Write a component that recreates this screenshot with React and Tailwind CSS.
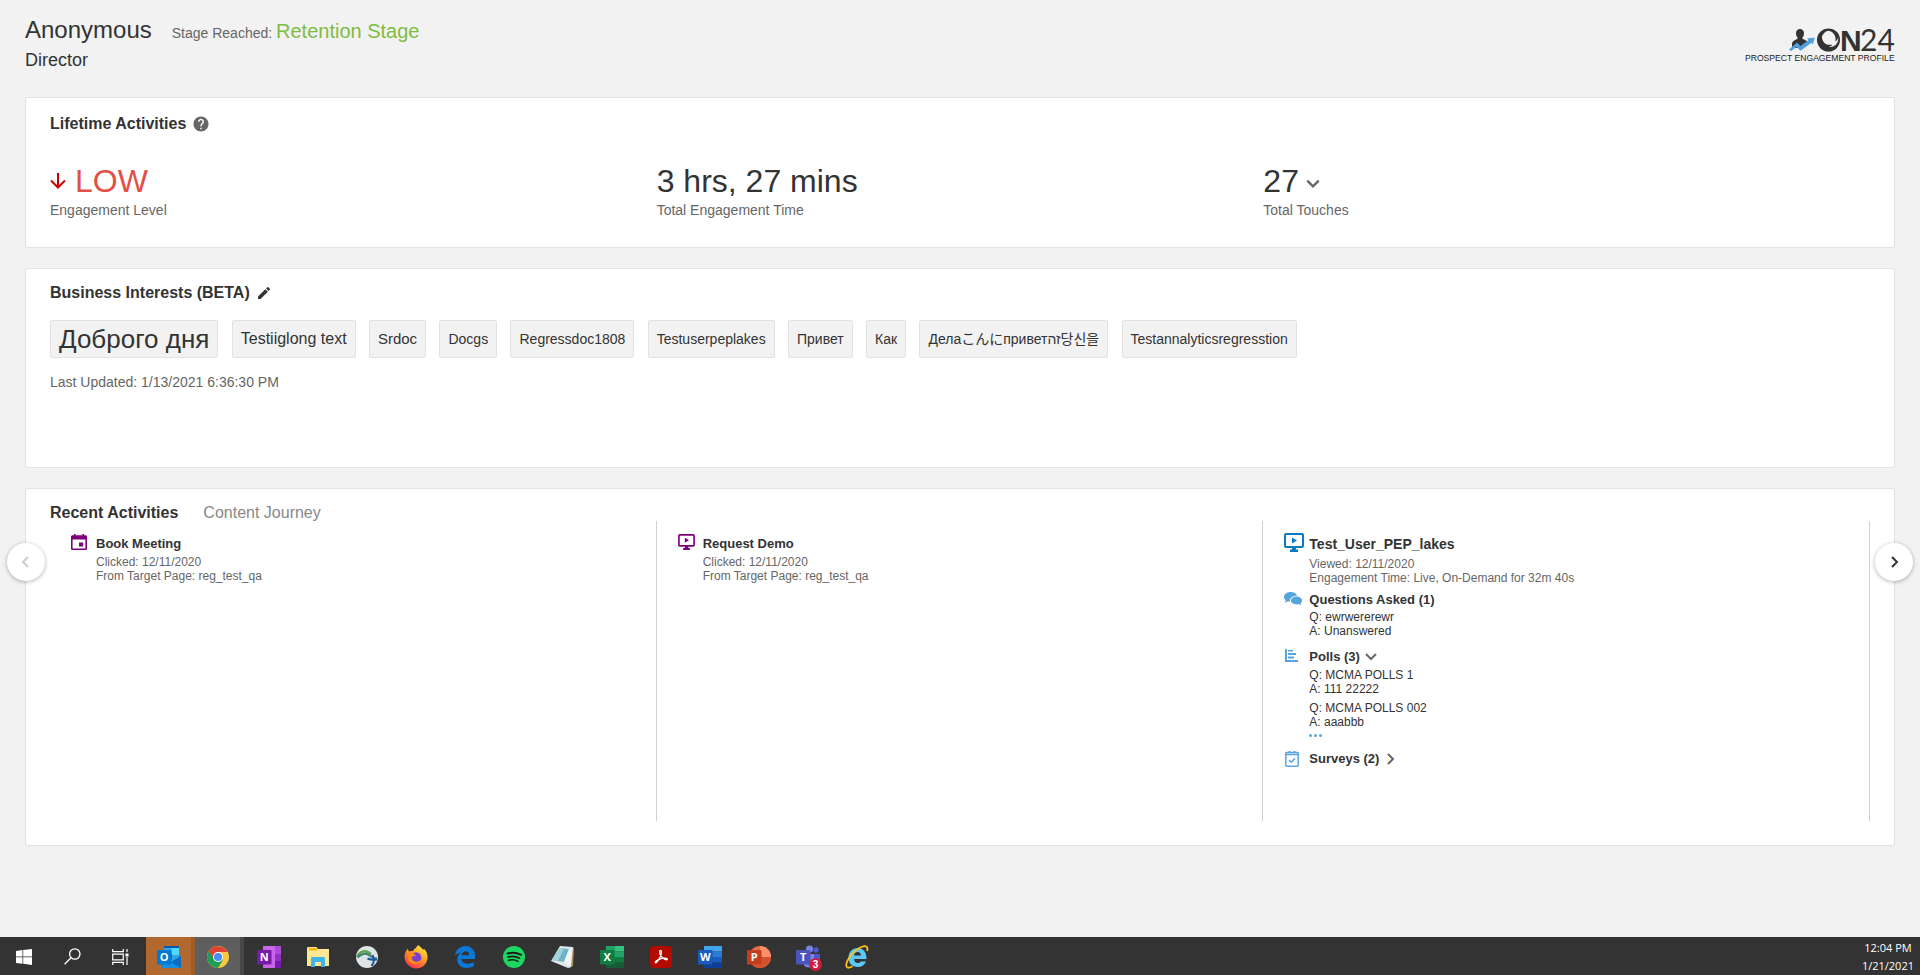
import { MdHelp, MdEdit } from "react-icons/md";

const STATS = [
  { value: "LOW", label: "Engagement Level", tone: "low" },
  { value: "3 hrs, 27 mins", label: "Total Engagement Time" },
  { value: "27", label: "Total Touches", expandable: true },
];

const INTERESTS = [
  { text: "Доброго дня", size: "text-[26px]" },
  { text: "Testiiglong text", size: "text-base" },
  { text: "Srdoc", size: "text-[15px]" },
  { text: "Docgs", size: "text-sm" },
  { text: "Regressdoc1808", size: "text-sm" },
  { text: "Testuserpeplakes", size: "text-sm" },
  { text: "Привет", size: "text-sm" },
  { text: "Как", size: "text-sm" },
  { text: "Делаこんにприветזה당신을", size: "text-sm" },
  { text: "Testannalyticsregresstion", size: "text-sm" },
];

const POLLS = [
  { q: "MCMA POLLS 1", a: "111 22222" },
  { q: "MCMA POLLS 002", a: "aaabbb" },
];

function Chevron({ dir = "right", size = 14, width = 2 }) {
  const paths = {
    right: "M5 2l5 5-5 5",
    left: "M9 2L4 7l5 5",
    down: "M2 4l5 5 5-5",
  };
  return (
    <svg width={size} height={size} viewBox="0 0 14 14" fill="none" stroke="currentColor" strokeWidth={width}>
      <path d={paths[dir]} />
    </svg>
  );
}

function ArrowDown() {
  return (
    <svg className="mr-[3px]" width="16" height="18" viewBox="0 0 16 18" fill="none" stroke="#cc0000" strokeWidth="2">
      <path d="M8 1v14M1 8.5l7 7 7-7" />
    </svg>
  );
}

function CalendarIcon() {
  return (
    <svg width="16" height="16" viewBox="0 0 16 16" fill="#7f007f">
      <path
        fillRule="evenodd"
        d="M3 0h1.6v1.2h6.8V0H13v1.2h1.4c.9 0 1.6.7 1.6 1.5v11.7c0 .9-.7 1.6-1.6 1.6H1.600C.7 16 0 15.300 0 14.400V2.700c0-.8.7-1.500 1.600-1.500H3zM1.600 5.600v8.800h12.800V5.600z"
      />
      <path d="M8 8.500h4.200v4H8z" />
    </svg>
  );
}

function MonitorIcon({ color, className }) {
  return (
    <svg className={className} viewBox="0 0 20 19" fill="none">
      <rect x="1" y="1" width="18" height="13" rx="1" stroke={color} strokeWidth="2" />
      <path d="M8 4.500l5 3-5 3zM8 14h4v2.500h2V19H6v-2.500h2z" fill={color} />
    </svg>
  );
}

function ChatIcon() {
  return (
    <svg width="18" height="14" viewBox="0 0 18 14" fill="#57a5df">
      <path d="M6.500 0C10 0 12.600 1.500 13 3.700 9 3.700 6 5.500 6 8.300c0 .500.1.9.3 1.300-.9 0-1.700-.1-2.400-.3-.9.8-2 1.200-3.400 1.200.7-.7 1.100-1.400 1.200-2.200C.6 7.400 0 6.200 0 5c0-2.800 2.900-5 6.500-5z" />
      <path d="M12.500 4.600c3.100 0 5.500 1.700 5.500 3.900 0 1.100-.5 2-1.400 2.700.1.700.4 1.300 1 1.900-1.200 0-2.100-.4-2.900-1-.7.2-1.400.3-2.200.3-3.100 0-5.500-1.700-5.500-3.900s2.400-3.900 5.500-3.900z" />
    </svg>
  );
}

function PollIcon() {
  return (
    <svg width="13" height="13" viewBox="0 0 13 13" fill="#57a5df">
      <path d="M0 0h2v11h11v2H0zM3 1h5v1.500H3zM3 4h8v2H3zM3 7.500h6v2H3z" />
    </svg>
  );
}

function SurveyIcon() {
  return (
    <svg width="14" height="16" viewBox="0 0 14 16" fill="none" stroke="#57a5df">
      <rect x=".8" y="1.500" width="12.400" height="13.700" rx="1" strokeWidth="1.500" />
      <path d="M1 3.500h12" strokeWidth="1.500" />
      <path d="M3.500.5h2M8.500.5h2" />
      <path d="M4 9l2.200 2.200L10 7.400" strokeWidth="1.500" />
    </svg>
  );
}

function Logo() {
  return (
    <svg width="152" height="40" viewBox="0 0 152 40" overflow="visible" aria-label="ON24 Prospect Engagement Profile">
      <g fill="#333">
        <path d="M57 2c2.500 0 4 1.800 4 4.200 0 2-.7 3.300-1.500 4.200v1.500c2.500.8 5 1.500 5.500 4.500l-9 4.500h-7v-4c.3-3 3-4.200 5.500-5v-1.500C53.700 9.500 53 8.200 53 6.200 53 3.800 54.500 2 57 2z" />
        <circle cx="85.500" cy="13" r="11.500" />
        <circle cx="87" cy="11.800" r="8.300" fill="#f2f2f2" />
        <path d="M84 3.500c6 .5 9.500 5 8.500 11 2-1.500 3.500-4 3-7-2-4-7-6-11.500-4z" />
        <path d="M79 9c-.5 6 4 10 10.500 8.500-3 3.500-8.500 3.500-11 0-1.500-2.500-1.300-6 .5-8.500z" />
        <text x="97" y="24" fontFamily="Liberation Sans, sans-serif" fontWeight="700" fontSize="30">N</text>
        <text x="117" y="24" fontFamily="Lato, sans-serif" fontSize="30">24</text>
      </g>
      <path d="M46 22.500l8-7 3.500 3.500 8-6-1.500-1.500 7.500-1-1.500 7-1.500-1.800-11 8-4-3.700-5.500 4z" fill="#4f9fdc" />
      <text x="2" y="34" fontFamily="Liberation Sans, sans-serif" fontSize="8.6" fill="#222">
        PROSPECT ENGAGEMENT PROFILE
      </text>
    </svg>
  );
}

function Card({ className = "", children, ...rest }) {
  return (
    <section className={`rounded-xs border border-[#e2e2e2] bg-white px-6 ${className}`} {...rest}>
      {children}
    </section>
  );
}

function ActivityRow({ icon, className = "", children }) {
  return (
    <div className={`flex ${className}`}>
      <div className="flex w-[25px] shrink-0 items-start">{icon}</div>
      <div>{children}</div>
    </div>
  );
}

function ActionActivity({ icon, title }) {
  return (
    <ActivityRow icon={icon}>
      <h3 className="mt-0.5 text-[13px] leading-4 font-bold">{title}</h3>
      <p className="mt-[3px] text-[#666]">Clicked: 12/11/2020</p>
      <p className="text-[#666]">From Target Page: reg_test_qa</p>
    </ActivityRow>
  );
}

function WebinarActivity() {
  return (
    <>
      <ActivityRow icon={<MonitorIcon color="#0b7bc1" className="h-[19px] w-5" />}>
        <h3 className="mt-[3px] text-sm leading-4 font-bold">Test_User_PEP_lakes</h3>
        <p className="mt-[5px] text-[#666]">Viewed: 12/11/2020</p>
        <p className="text-[#666]">Engagement Time: Live, On-Demand for 32m 40s</p>
      </ActivityRow>
      <ActivityRow className="mt-[7px]" icon={<ChatIcon />}>
        <h3 className="text-[13px] leading-4 font-bold">Questions Asked (1)</h3>
        <p className="mt-0.5">Q: ewrwererewr</p>
        <p>A: Unanswered</p>
      </ActivityRow>
      <ActivityRow className="mt-[11px]" icon={<span className="pl-px"><PollIcon /></span>}>
        <button className="flex items-center gap-1 text-[13px] leading-4 font-bold">
          Polls (3)
          <span className="text-[#666]"><Chevron dir="down" /></span>
        </button>
        <div className="mt-[3px] flex flex-col gap-[5px]">
          {POLLS.map((p) => (
            <div key={p.q}>
              <p>Q: {p.q}</p>
              <p>A: {p.a}</p>
            </div>
          ))}
        </div>
        <button className="flex h-3 items-center gap-0.5" aria-label="Show more polls">
          <span className="size-[3px] rounded-full bg-[#57a5df]" />
          <span className="size-[3px] rounded-full bg-[#57a5df]" />
          <span className="size-[3px] rounded-full bg-[#57a5df]" />
        </button>
      </ActivityRow>
      <ActivityRow className="mt-2.5" icon={<span className="pl-px"><SurveyIcon /></span>}>
        <button className="flex items-center gap-1 text-[13px] leading-4 font-bold">
          Surveys (2)
          <span className="text-[#666]"><Chevron /></span>
        </button>
      </ActivityRow>
    </>
  );
}

/* ---- taskbar ---- */

function OfficeIcon({ letter, dark, children }) {
  return (
    <svg width="24" height="24" viewBox="0 0 24 24">
      {children}
      <rect x="0" y="5" width="14.500" height="14.500" rx="1" fill={dark} />
      <text x="7.200" y="16" textAnchor="middle" fontFamily="Open Sans, sans-serif" fontWeight="700" fontSize="11" fill="#fff">
        {letter}
      </text>
    </svg>
  );
}

function Stripes({ colors }) {
  return (
    <>
      {colors.map((c, i) => (
        <rect key={c} x="6" y={1 + i * 5.5} width="18" height="5.500" fill={c} />
      ))}
    </>
  );
}

const SYSTEM_APPS = [
  {
    name: "Start",
    icon: (
      <svg width="16" height="16" viewBox="0 0 16 16" fill="#fff">
        <path d="M0 2l6.500-.9v6.500H0zM7.200 1L16 0v7.600H7.200zM0 8.300h6.500v6.500L0 13.900zM7.200 8.300H16V16l-8.800-1.200z" />
      </svg>
    ),
  },
  {
    name: "Search",
    icon: (
      <svg width="17" height="17" viewBox="0 0 17 17" fill="none" stroke="#fff" strokeWidth="1.300">
        <circle cx="10.800" cy="6" r="5.200" />
        <path d="M7 9.800L.6 16.300" />
      </svg>
    ),
  },
  {
    name: "Task View",
    icon: (
      <svg width="17" height="16" viewBox="0 0 17 16" fill="none" stroke="#fff" strokeWidth="1.200">
        <path d="M.7 0v2.700h10.600V0M.7 16v-2.700h10.600V16M.7 5.200h10.600v5.600H.7zM15 0v3M15 8v8" />
        <path d="M13.500 4.500h3v3h-3z" fill="#fff" stroke="none" />
      </svg>
    ),
  },
];

const APPS = [
  {
    name: "Outlook",
    state: "border-r-4 border-[#9c5c28] bg-[#b2692f]",
    icon: (
      <OfficeIcon letter="O" dark="#0078d4">
        <rect x="7" y="1" width="15" height="20" fill="#28a8ea" />
        <path d="M7 1h15v2H7z" fill="#0358a7" />
        <path d="M14.500 3H22v7h-7.500z" fill="#50d9ff" />
        <path d="M7 9h8v6H7z" fill="#0364b8" />
        <path d="M5 23V14l10 3 9-6v12z" fill="#1490df" />
        <path d="M14 17l10-6v12z" fill="#0f6cbd" />
      </OfficeIcon>
    ),
  },
  {
    name: "Chrome",
    state: "border-r-4 border-[#484848] bg-[#5e5e5e]",
    icon: (
      <svg width="22" height="22" viewBox="0 0 22 22">
        <circle cx="11" cy="11" r="11" fill="#f8c73e" />
        <path d="M11 11L1.500 5.500A11 11 0 0 0 11 22l5-8.300z" fill="#1f9d55" />
        <path d="M11 11H6L1.500 5.500A11 11 0 0 1 20.600 6H11z" fill="#dd4335" />
        <circle cx="11" cy="11" r="5" fill="#fff" />
        <circle cx="11" cy="11" r="4" fill="#4b8bf5" />
      </svg>
    ),
  },
  {
    name: "OneNote",
    icon: (
      <OfficeIcon letter="N" dark="#7719aa">
        <path d="M6 1h18v22H6z" fill="#ca64ea" />
        <path d="M18 1h6v8h-6z" fill="#ae4bd5" />
        <path d="M18 9h6v7h-6z" fill="#9332bf" />
        <path d="M18 16h6v7h-6z" fill="#7719aa" />
      </OfficeIcon>
    ),
  },
  {
    name: "File Explorer",
    icon: (
      <svg width="22" height="20" viewBox="0 0 22 20">
        <path d="M0 1.500C0 .7.500 0 1.300 0h8L11 2h11v17H0z" fill="#ffe793" />
        <path d="M2 1h8v2.500H2z" fill="#f6b50f" />
        <path d="M4 20v-8.500c0-.8.500-1.500 1.300-1.500h11.400c.8 0 1.300.7 1.300 1.500V20h-4v-5H8v5z" fill="#3fb4e8" />
      </svg>
    ),
  },
  {
    name: "AnyConnect",
    icon: (
      <svg width="22" height="22" viewBox="0 0 22 22">
        <circle cx="11" cy="11" r="11" fill="#dfe3e6" />
        <path d="M1 11C4 5 10 3 15 8.500" fill="none" stroke="#5fa548" strokeWidth="2.500" />
        <path d="M1.500 11.500C5 8.500 8 7 11 8c3.500 1 5 5 10 4.500" fill="none" stroke="#3e7f78" strokeWidth="2" />
        <path d="M11.500 12.500c3 1.500 6 1.500 9.500 1M16.500 9c2 4 1.500 8-1 11" fill="none" stroke="#19589b" strokeWidth="2" />
      </svg>
    ),
  },
  {
    name: "Firefox",
    icon: (
      <svg width="24" height="24" viewBox="0 0 24 24">
        <defs>
          <linearGradient id="fox" x1=".8" y1="0" x2=".2" y2="1">
            <stop offset="0" stopColor="#fff14a" />
            <stop offset=".45" stopColor="#ff9a1f" />
            <stop offset="1" stopColor="#f0245c" />
          </linearGradient>
        </defs>
        <path d="M14 0c3 2 4 3.500 5 5 .7-.3.700-1 .7-1.500C22.500 6 24 9.500 23.500 14A11.600 11.600 0 0 1 .6 13.500C.2 9.500 1.500 6 4 3.500c0 1.500.5 2.300 1 3 1-.5 3-.7 4-.2C9.500 4 12.500 3 14 0z" fill="url(#fox)" />
        <circle cx="12" cy="12.500" r="5.300" fill="#7a3fd0" />
        <path d="M5 8c3-1 5 .5 7 2-1.500 1.500-4 1-4.500 3 1 4 6 5 9 2-1 5-9 6-12 1-1-3-.5-6 .5-8z" fill="#ff8a1c" />
      </svg>
    ),
  },
  {
    name: "Edge",
    icon: (
      <svg width="20" height="22" viewBox="0 0 20 22">
        <path
          d="M0 9.500C1 3.500 5 0 10.500 0 16.500 0 20 4.500 20 9.500V13H6.500c.2 3.200 3 4.700 6 4.700 2.300 0 4.300-.5 6.300-1.700v4.300C16.700 21.500 14 22 11.500 22 6 22 2.200 18.600 2.200 13.500c0-3 1.600-5.600 4.200-7C3.700 7 1.500 8 0 9.500zM6.700 9.300h7.500c0-2.500-1-4-3.500-4-2.300 0-3.700 1.700-4 4z"
          fill="#0b78d7"
        />
      </svg>
    ),
  },
  {
    name: "Spotify",
    icon: (
      <svg width="22" height="22" viewBox="0 0 22 22" fill="none" stroke="#1c1c1c" strokeLinecap="round">
        <circle cx="11" cy="11" r="11" fill="#1ed760" stroke="none" />
        <path d="M4.500 7.500c4.500-1.300 9.500-.9 13.500 1.300" strokeWidth="2" />
        <path d="M5 11c4-1.100 8-.7 11.500 1.200" strokeWidth="1.700" />
        <path d="M5.500 14.300c3.500-.9 6.800-.5 9.600 1.100" strokeWidth="1.400" />
      </svg>
    ),
  },
  {
    name: "Notepad",
    icon: (
      <svg width="24" height="24" viewBox="0 0 24 24">
        <path d="M20 2l3 1-1 18-4 2z" fill="#b08a55" />
        <path d="M9 1l13 1-2 20-3 1L0 16z" fill="#dfe9ec" />
        <path d="M9 3l9 1-5 13L1 15z" fill="#6fb5c6" />
        <path d="M9 3l4 .5L7 16l-6-1z" fill="#a3d3de" />
        <path d="M18 4l3 0-2 17-6-4z" fill="#f1f5f6" />
      </svg>
    ),
  },
  {
    name: "Excel",
    icon: (
      <OfficeIcon letter="X" dark="#107c41">
        <path d="M6 1h9v22H6z" fill="#21a366" />
        <path d="M15 1h9v5.500h-9z" fill="#33c481" />
        <path d="M15 6.500h9V12h-9z" fill="#21a366" />
        <path d="M6 12h18v5.500H6z" fill="#107c41" />
        <path d="M6 17.500h18V23H6z" fill="#185c37" />
      </OfficeIcon>
    ),
  },
  {
    name: "Acrobat",
    icon: (
      <svg width="22" height="22" viewBox="0 0 22 22" fill="none">
        <rect width="22" height="22" rx="4" fill="#b30b00" />
        <path
          d="M10.500 4.500c1.700 0 .8 4-.3 6.300-1.200 2.600-3 6-4.500 6-1.500-.3 1-3.200 5.300-4.200 3-.7 6.500-.5 6.300.8-.3 1.300-3.800-.2-5.800-2.700-1.700-2.200-2.500-6.200-1-6.200z"
          stroke="#fff"
          strokeWidth="1.300"
        />
      </svg>
    ),
  },
  {
    name: "Word",
    icon: (
      <OfficeIcon letter="W" dark="#185abd">
        <Stripes colors={["#41a5ee", "#2b7cd3", "#185cbe", "#103f91"]} />
      </OfficeIcon>
    ),
  },
  {
    name: "PowerPoint",
    icon: (
      <OfficeIcon letter="P" dark="#c43e1c">
        <circle cx="13" cy="12" r="11" fill="#ed6c47" />
        <path d="M13 1a11 11 0 0 1 11 11H13z" fill="#ff8f6b" />
        <path d="M2 12h22a11 11 0 0 1-22 0z" fill="#d35230" />
      </OfficeIcon>
    ),
  },
  {
    name: "Teams",
    badge: "3",
    icon: (
      <OfficeIcon letter="T" dark="#4b53bc">
        <circle cx="20" cy="5" r="2.700" fill="#5059c9" />
        <circle cx="13.500" cy="4" r="3.500" fill="#7b83eb" />
        <path d="M16 9h8v7c0 3-5 4-7 2z" fill="#5059c9" />
        <path d="M7 9h11v9c0 6-10 6-11 0z" fill="#7b83eb" />
      </OfficeIcon>
    ),
  },
  {
    name: "Internet Explorer",
    icon: (
      <svg width="24" height="24" viewBox="0 0 24 24" fill="none">
        <path
          d="M21 16.500c-1.500 3.700-4.500 5.500-8.500 5.500C7 22 3.500 18 3.500 12.500S7.500 3 12.700 3c5.500 0 9 4 8.800 11H9c.2 2.500 1.500 4 3.700 4 1.500 0 2.500-.5 3.100-1.500zM9 10.500h7c-.2-2.200-1.400-3.500-3.400-3.500S9.300 8.300 9 10.500z"
          fill="#5bc8f5"
        />
        <path d="M22 6c1.500-4-1-6-5.500-4C8 5.500 0 16.500 1.500 21.500c.8 2 3.500 1.300 6-.3" stroke="#fbc116" strokeWidth="1.800" />
      </svg>
    ),
  },
];

function Taskbar() {
  return (
    <footer className="flex h-[38px] items-stretch bg-[#333]">
      <div className="flex pr-0.5">
        {SYSTEM_APPS.map((app) => (
          <button key={app.name} aria-label={app.name} className="flex w-12 items-center justify-center pt-px">
            {app.icon}
          </button>
        ))}
      </div>
      {APPS.map((app) => (
        <button
          key={app.name}
          aria-label={app.name}
          className={`relative flex w-[49px] items-center justify-center pt-px ${app.state || ""}`}
        >
          {app.icon}
          {app.badge && (
            <span className="absolute right-2.5 bottom-1 flex size-[13px] items-center justify-center rounded-full bg-[#cc1f3d] text-[10px] leading-none font-bold text-white">
              {app.badge}
            </span>
          )}
        </button>
      ))}
      <div className="ml-auto flex flex-col items-center justify-center pt-0.5 pr-1.5 font-['Open_Sans',sans-serif] text-[11px] leading-[18px] text-white">
        <span>12:04 PM</span>
        <span>1/21/2021</span>
      </div>
    </footer>
  );
}

export default function App() {
  return (
    <div className="flex min-h-screen flex-col bg-[#f2f2f2] font-['Liberation_Sans','Noto_Sans_CJK_JP','Noto_Sans_CJK_KR',sans-serif] text-[#333]">
      <header className="flex items-start justify-between px-[25px] pt-4 pb-[26px]">
        <div>
          <div className="flex items-baseline gap-5">
            <h1 className="text-2xl leading-7">Anonymous</h1>
            <p className="text-sm text-[#666]">
              Stage Reached: <span className="text-xl leading-7 text-[#7fbc42]">Retention Stage</span>
            </p>
          </div>
          <p className="mt-1 text-lg leading-[22px]">Director</p>
        </div>
        <div className="pt-[11px]">
          <Logo />
        </div>
      </header>

      <main className="flex flex-1 flex-col gap-5 px-[25px]">
        <Card className="pt-4 pb-[27px]">
          <h2 className="flex items-center gap-1.5 font-bold leading-5">
            Lifetime Activities
            <MdHelp size={18} color="#666" />
          </h2>
          <div className="mt-[29px] grid grid-cols-3">
            {STATS.map((s) => (
              <div key={s.label}>
                <div className={`flex items-center gap-1.5 text-[32px] leading-9 ${s.tone === "low" ? "text-[#e2504a]" : ""}`}>
                  {s.tone === "low" && <ArrowDown />}
                  {s.value}
                  {s.expandable && (
                    <button className="pt-1.5 text-[#666]" aria-label="Show touches">
                      <Chevron dir="down" size={16} />
                    </button>
                  )}
                </div>
                <p className="mt-px text-sm text-[#666]">{s.label}</p>
              </div>
            ))}
          </div>
        </Card>

        <Card className="min-h-[200px] pt-3.5">
          <h2 className="flex items-center gap-1.5 font-bold leading-5">
            Business Interests (BETA)
            <button aria-label="Edit interests">
              <MdEdit size={16} />
            </button>
          </h2>
          <ul className="mt-[17px] text-xs leading-[38px]">
            {INTERESTS.map((i) => [
              <li
                key={i.text}
                className={`mr-2.5 inline-flex h-[38px] items-center rounded-xs border border-[#e2e2e2] bg-[#f2f2f2] px-2 align-top ${i.size}`}
              >
                {i.text}
              </li>,
              " ",
            ])}
          </ul>
          <p className="mt-3.5 text-sm text-[#666]">Last Updated: 1/13/2021 6:36:30 PM</p>
        </Card>

        <Card className="relative pt-4 pb-6" aria-label="Activities">
          <div className="flex gap-[25px] leading-4" role="tablist">
            <button role="tab" aria-selected="true" className="font-bold">Recent Activities</button>
            <button role="tab" aria-selected="false" className="text-[#888]">Content Journey</button>
          </div>
          <div className="grid min-h-[300px] grid-cols-3 text-xs leading-[14px]">
            <div className="border-r border-[#d0d0d0] pt-[13px] pl-[21px]">
              <ActionActivity icon={<CalendarIcon />} title="Book Meeting" />
            </div>
            <div className="border-r border-[#d0d0d0] pt-[13px] pl-[21px]">
              <ActionActivity
                icon={<MonitorIcon color="#7f007f" className="h-4 w-[17px]" />}
                title="Request Demo"
              />
            </div>
            <div className="border-r border-[#d0d0d0] pt-3 pl-[21px]">
              <WebinarActivity />
            </div>
          </div>
          <button
            aria-label="Previous"
            disabled
            className="absolute top-[54px] -left-[19px] flex size-[38px] items-center justify-center rounded-full bg-white text-[#ccc] shadow-[0_1px_4px_rgba(0,0,0,0.3)]"
          >
            <Chevron dir="left" />
          </button>
          <button
            aria-label="Next"
            className="absolute top-[54px] -right-[19px] flex size-[38px] items-center justify-center rounded-full bg-white shadow-[0_1px_4px_rgba(0,0,0,0.3)]"
          >
            <Chevron />
          </button>
        </Card>
      </main>

      <Taskbar />
    </div>
  );
}
